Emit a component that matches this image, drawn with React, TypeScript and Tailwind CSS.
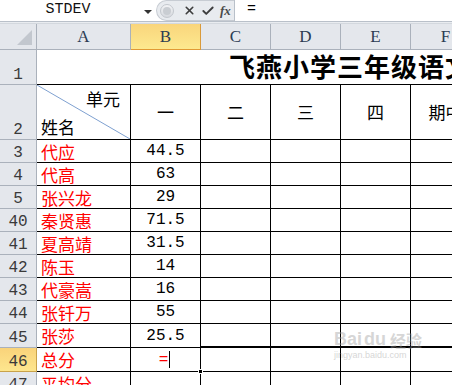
import { X, Check } from 'lucide-react'

const cjk = { fontFamily: '"Noto Sans CJK SC", sans-serif' }
const mono = { fontFamily: '"Liberation Mono", "Noto Sans CJK SC", monospace' }

type Row = { no: string; name: string; score: string; h: string }

const rows: Row[] = [
  { no: '3', name: '代应', score: '44.5', h: 'h-[23px]' },
  { no: '4', name: '代高', score: '63', h: 'h-[23px]' },
  { no: '5', name: '张兴龙', score: '29', h: 'h-[23px]' },
  { no: '40', name: '秦贤惠', score: '71.5', h: 'h-[23px]' },
  { no: '41', name: '夏高靖', score: '31.5', h: 'h-[23px]' },
  { no: '42', name: '陈玉', score: '14', h: 'h-[23px]' },
  { no: '43', name: '代豪嵩', score: '16', h: 'h-[23px]' },
  { no: '44', name: '张钎万', score: '55', h: 'h-[23px]' },
  { no: '45', name: '张莎', score: '25.5', h: 'h-[24px]' },
]

function RowHead({ label, active, h }: { label: string; active?: boolean; h: string }) {
  return (
    <div
      className={`${h} w-[37px] shrink-0 flex items-end justify-center pb-[1px] border-r border-b text-[16px] leading-none text-[#3a3a3a] ${
        active
          ? 'bg-gradient-to-b from-[#f9d37a] to-[#fde68e] border-[#c8a24a]'
          : 'bg-[#e4e7ec] border-[#aab1bb]'
      }`}
      style={mono}
    >
      {label}
    </div>
  )
}

export default function App() {
  const colHeads = ['A', 'B', 'C', 'D', 'E', 'F']
  const colW = ['w-[94px]', 'w-[70px]', 'w-[70px]', 'w-[70px]', 'w-[70px]', 'w-[70px]']

  return (
    <div className="relative w-[452px] h-[385px] overflow-hidden bg-white">
      {/* formula bar */}
      <div className="flex h-[22px] border-b border-[#b9c0c9] bg-white">
        <div className="relative w-[156px] shrink-0 flex items-center justify-center text-[15px] text-[#111]" style={mono}>
          <span className="-ml-[20px]">STDEV</span>
          <span className="absolute left-[144px] top-[10px] w-0 h-0 border-l-[4px] border-r-[4px] border-t-[4px] border-l-transparent border-r-transparent border-t-[#333]" />
        </div>
        <div className="flex items-center w-[78px] shrink-0 bg-[#e8ebef] rounded-l-full border-l border-t border-b border-[#c7ccd3] -my-[0px]">
          <div className="ml-[3px] w-[14px] h-[14px] rounded-full bg-gradient-to-b from-[#f3f4f6] to-[#d6d9de] border border-[#c3c7cd] flex items-center justify-center">
            <div className="w-[8px] h-[8px] rounded-full bg-[#c9cdd2]" />
          </div>
          <X className="ml-[9px] w-[13px] h-[13px] text-[#3d3d3d]" strokeWidth={3} />
          <Check className="ml-[5px] w-[14px] h-[14px] text-[#3d3d3d]" strokeWidth={3.2} />
          <span className="ml-[5px] italic font-bold text-[13px] leading-none text-[#4a4a4a]" style={{ fontFamily: '"Liberation Serif", serif' }}>
            fx
          </span>
        </div>
        <div className="flex-1 flex items-center pl-[12px] border-l border-[#b9c0c9] text-[15px]" style={mono}>
          =
        </div>
      </div>
      <div className="h-[2px] bg-[#e9ecf0] border-b border-[#d3d8de]" />

      {/* column headers */}
      <div className="flex h-[26px]">
        <div className="relative w-[37px] shrink-0 bg-[#e4e7ec] border-r border-b border-[#aab1bb]">
          <div className="absolute right-[4px] bottom-[4px] w-0 h-0 border-l-[15px] border-t-[15px] border-l-transparent border-t-transparent border-r-0 border-b-0 border-[#c2c7ce] [border-bottom:15px_solid_#c2c7ce]" />
        </div>
        {colHeads.map((c, i) => (
          <div
            key={c}
            className={`${colW[i]} shrink-0 flex items-center justify-center border-r border-b text-[17px] ${
              c === 'B'
                ? 'bg-gradient-to-b from-[#f9d57c] to-[#fde98f] border-[#d99a3a] border-b-[#e19a35]'
                : 'bg-[#e4e7ec] border-[#aab1bb]'
            }`}
            style={{ fontFamily: '"Liberation Serif", serif', color: '#2b3b52' }}
          >
            {c}
          </div>
        ))}
      </div>

      {/* row 1 title */}
      <div className="flex h-[35px]">
        <RowHead label="1" h="h-[35px]" />
        <div className="relative flex-1 border-b border-black">
          <span className="absolute left-[192px] top-[3px] whitespace-nowrap text-[26px] font-bold leading-none text-black tracking-[1px]" style={cjk}>
            飞燕小学三年级语文成绩统计表
          </span>
        </div>
      </div>

      {/* row 2 */}
      <div className="flex h-[55px]">
        <RowHead label="2" h="h-[55px]" />
        <div className="relative w-[94px] shrink-0 border-r border-b border-black text-[17px] text-black" style={cjk}>
          <svg className="absolute inset-0" width="93" height="54">
            <line x1="0" y1="0" x2="93" y2="54" stroke="#7ea0d0" strokeWidth="1" />
          </svg>
          <span className="absolute right-[10px] top-[5px] leading-none">单元</span>
          <span className="absolute left-[4px] bottom-[4px] leading-none">姓名</span>
        </div>
        {['一', '二', '三', '四', '期中'].map((t) => (
          <div key={t} className="w-[70px] shrink-0 flex items-center justify-center border-r border-b border-black text-[17px] text-black whitespace-nowrap" style={cjk}>
            {t}
          </div>
        ))}
      </div>

      {/* data rows */}
      {rows.map((r) => (
        <div key={r.no} className={`flex ${r.h}`}>
          <RowHead label={r.no} h={r.h} />
          <div className="w-[94px] shrink-0 flex items-center pl-[4px] border-r border-b border-black text-[17px] leading-none text-[#ff0000]" style={cjk}>
            {r.name}
          </div>
          <div className="w-[70px] shrink-0 flex items-center justify-center border-r border-b border-black text-[16px] leading-none text-black" style={mono}>
            {r.score}
          </div>
          {[0, 1, 2, 3].map((k) => (
            <div key={k} className={`w-[70px] shrink-0 border-r border-black ${r.no === '45' ? 'border-b-2' : 'border-b'}`} />
          ))}
        </div>
      ))}

      {/* row 46 active */}
      <div className="flex h-[24px]">
        <RowHead label="46" h="h-[24px]" active />
        <div className="w-[94px] shrink-0 flex items-center pl-[4px] border-r border-b border-black text-[17px] leading-none text-[#ff0000]" style={cjk}>
          总分
        </div>
        <div className="relative w-[70px] shrink-0 flex items-center justify-center border-r border-b border-black text-[16px] leading-none text-[#ff0000]" style={mono}>
          <span className="ml-[-2px]">=</span>
          <span className="ml-[1px] w-[1px] h-[17px] bg-black" />
          <span className="absolute -right-[3px] -bottom-[3px] w-[5px] h-[5px] bg-black border border-white z-10" />
        </div>
        {[0, 1, 2, 3].map((k) => (
          <div key={k} className="w-[70px] shrink-0 border-r border-b border-black" />
        ))}
      </div>

      {/* row 47 */}
      <div className="flex h-[23px]">
        <RowHead label="47" h="h-[23px]" />
        <div className="w-[94px] shrink-0 flex items-center pl-[4px] border-r border-b border-black text-[17px] leading-none text-[#ff0000]" style={cjk}>
          平均分
        </div>
        {[0, 1, 2, 3, 4].map((k) => (
          <div key={k} className="w-[70px] shrink-0 border-r border-b border-black" />
        ))}
      </div>

      {/* watermark */}
      <div className="absolute left-[334px] top-[330px] pointer-events-none select-none opacity-40 text-[#9a9a9a]">
        <div className="flex items-end gap-[2px] leading-none">
          <span className="text-[18px] font-bold" style={{ fontFamily: '"Liberation Sans", sans-serif' }}>Bai</span>
          <span className="text-[18px] font-bold" style={{ fontFamily: '"Liberation Sans", sans-serif' }}>du</span>
          <span className="ml-[2px] text-[16px] font-bold" style={cjk}>经验</span>
        </div>
        <div className="mt-[3px] text-[9px] leading-none" style={{ fontFamily: '"Liberation Sans", sans-serif' }}>
          jingyan.baidu.com
        </div>
      </div>
    </div>
  )
}
